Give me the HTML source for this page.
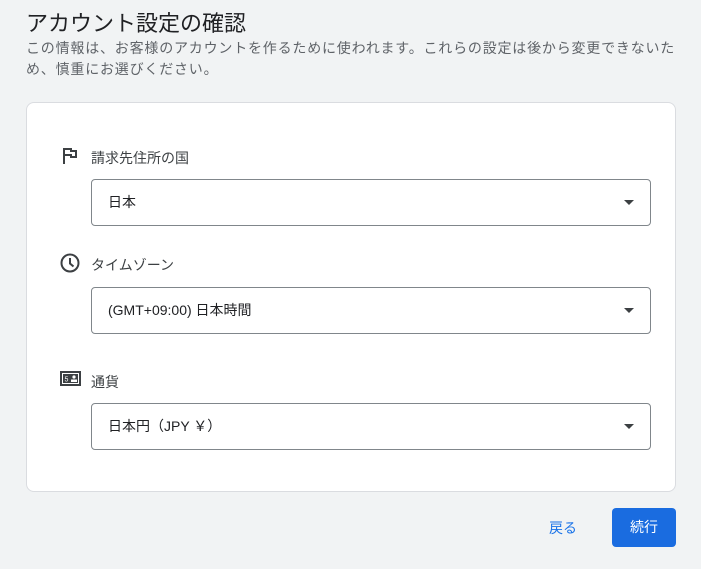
<!DOCTYPE html><html><head><meta charset="utf-8"><style>
body{margin:0;width:701px;height:569px;background:#f1f3f4;font-family:"Liberation Sans","Noto Sans CJK JP",sans-serif;position:relative;overflow:hidden;color:#202124}
.a{position:absolute}
h1{position:absolute;left:26px;top:6px;margin:0;font-size:22px;font-weight:400;color:#202124}
.desc{left:26px;top:38px;font-size:14px;line-height:21px;color:#5f6368;width:670px;letter-spacing:0.8px}
.card{left:26px;top:102px;width:648px;height:388px;background:#fff;border:1px solid #dadce0;border-radius:8px}
.lbl{font-size:14px;color:#3c4043}
.sel{left:91px;width:558px;height:45px;border:1px solid #80868b;border-radius:4px;background:#fff;font-size:14px;line-height:45px;color:#202124}
.sel span{position:absolute;left:16px}
.sel i{position:absolute;right:16px;top:20px;width:0;height:0;border-left:5px solid transparent;border-right:5px solid transparent;border-top:5px solid #3c4043}
.btn{left:612px;top:508px;width:64px;height:39px;background:#1a6ce0;border-radius:4px;color:#fff;font-size:14px;text-align:center;line-height:39px}
</style></head><body>
<h1>アカウント設定の確認</h1>
<div class="a desc">この情報は、お客様のアカウントを作るために使われます。これらの設定は後から変更できないた<br>め、慎重にお選びください。</div>
<div class="a card"></div>
<svg class="a" style="left:61px;top:147px" width="18" height="18" viewBox="0 0 18 18"><path d="M2 17V1h9v2h5v8H9V9H4v8z M4 3v4h7v2h3V5h-5V3z" fill="#3c4043" fill-rule="evenodd"/></svg>
<div class="a lbl" style="left:91px;top:148px">請求先住所の国</div>
<div class="a sel" style="top:179px"><span>日本</span><i></i></div>
<svg class="a" style="left:59px;top:252px" width="22" height="22" viewBox="0 0 22 22"><circle cx="11" cy="11" r="8.5" fill="none" stroke="#3c4043" stroke-width="2"/><path d="M11 6v5.5l3.5 3" fill="none" stroke="#3c4043" stroke-width="2"/></svg>
<div class="a lbl" style="left:91px;top:255px">タイムゾーン</div>
<div class="a sel" style="top:287px"><span>(GMT+09:00) 日本時間</span><i></i></div>
<svg class="a" style="left:60px;top:371px" width="21" height="16" viewBox="0 0 21 16"><rect x="1" y="1" width="19" height="13" fill="none" stroke="#3c4043" stroke-width="2"/><rect x="3" y="3" width="15" height="9" fill="#3c4043"/><text x="4.5" y="10.5" font-size="7" fill="#fff" font-family="Liberation Sans">5</text><circle cx="14" cy="6" r="1.6" fill="#fff"/><rect x="11" y="8.5" width="6" height="2.5" fill="#fff"/></svg>
<div class="a lbl" style="left:91px;top:372px">通貨</div>
<div class="a sel" style="top:403px"><span>日本円（JPY ￥）</span><i></i></div>
<div class="a" style="left:549px;top:518px;font-size:14px;color:#1a73e8">戻る</div>
<div class="a btn">続行</div>
</body></html>
